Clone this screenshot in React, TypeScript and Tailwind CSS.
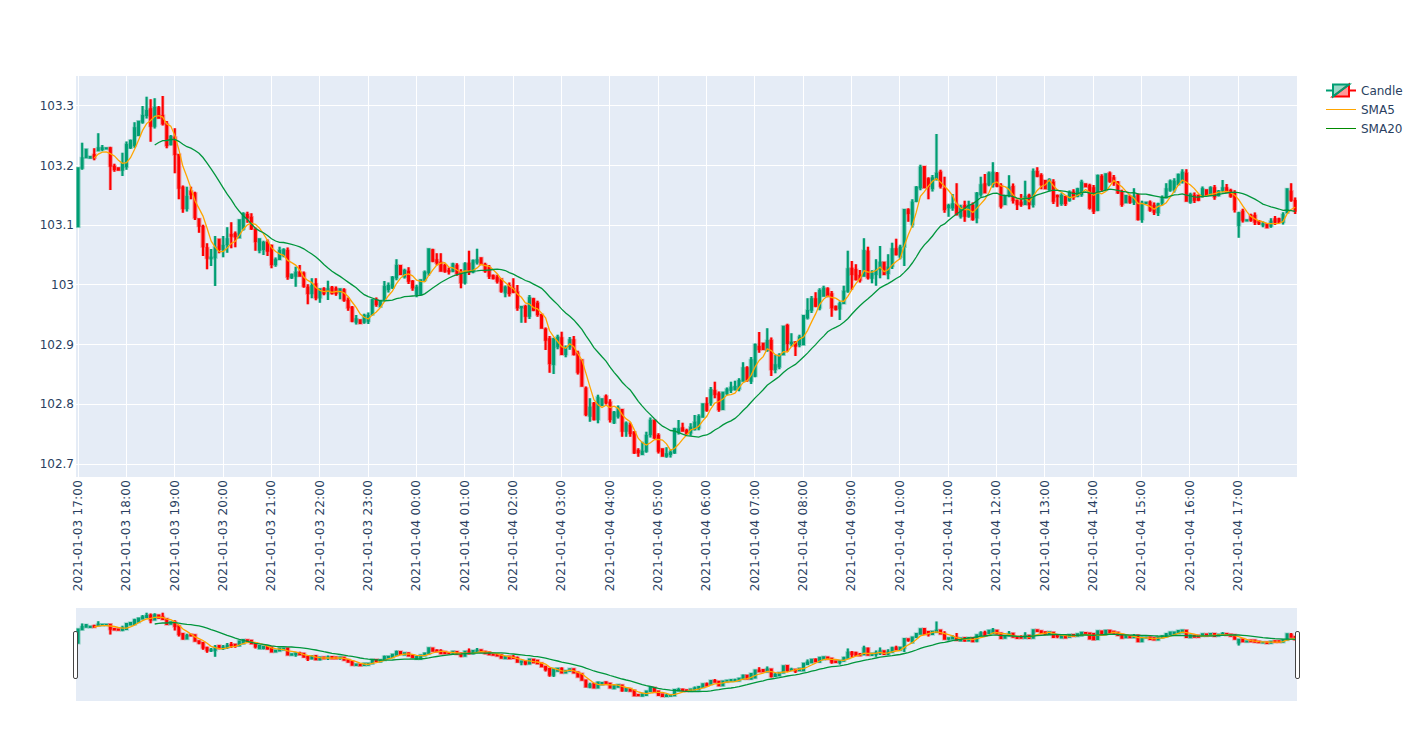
import React from "react";

// candle rows read off the chart: [up, bodyTop, bodyBottom, wickTop, wickBottom], 3x pixel rows from yBase
type Row = [number, number, number, number?, number?];

const sections: { yBase: number; rows: Row[] }[] = [
  {
    yBase: 70,
    rows: [
      [1,292,472,292,472],[1,262,296,218],[1,236,265,236,265],[1,258,266,258,266],[0,252,265,235],[1,232,244,190],[1,232,240,225],[1,232,235,232,235],
      [0,232,290,0,360],[0,287,300],[0,292,302],[1,278,302,248,318],[1,222,292],[1,210,235],[1,172,228,157],[1,152,198],
      [1,135,158,108],[1,120,138,80],[0,115,170,88,215],[1,110,170,85],[0,112,146,108],[0,135,163,78],[0,160,228,0,235],[1,198,225,195],
      [0,200,255,175,310],[0,252,356,0,388],[0,350,417,0,428],[1,378,417,350],[0,362,375,350,388],[0,368,445,365,450],[0,445,470,0,488],[0,468,532,0,558],
      [0,532,566,520,598],[1,560,568,537,588],[1,530,565,498,648],[0,506,540,0,550],[1,525,540,498,562],[1,505,525,472,548],[0,492,500,457,535],[0,490,502,0,532],
      [1,448,505],[1,430,478],[0,432,445,425,458],[0,440,478,430],[0,478,516,0,542],[1,505,542,0,550],[1,516,540,0,555],[0,516,545,0,558],
      [0,525,585,0,595],[1,568,585],[1,540,570,530],[1,538,558],[0,540,622],[1,612,625],[1,605,620,590,650],[0,605,620,585],
      [0,608,650],[0,650,672,0,703],[1,645,672,625,685],[0,640,685,625],[1,655,685,0,698],[0,655,672],[1,655,665,632,690],[0,650,672],
      [0,655,672],[1,655,668,0,688],[0,658,692],[0,690,715],[0,710,755],[1,745,758,735],[0,748,762],[1,735,758],
      [1,735,755],[1,688,735],[0,688,705],[1,690,712],
    ],
  },
  {
    yBase: 220,
    rows: [
      [1,198,240,183],[1,195,210],[1,170,205],[1,135,175,118],[0,135,165],[1,150,172],[0,152,185,142],[0,182,205,0,212],
      [1,200,226],[1,178,226],[1,155,182],[1,85,160,85],[0,88,125],[0,118,130,100],[0,125,155,100],[0,135,155],
      [0,150,155],[1,130,155],[0,135,162],[0,155,190,148,205],[1,130,190],[0,128,158,92],[1,120,158],[1,118,128,86],
      [0,112,135],[0,132,155],[0,142,170],[0,165,177],[0,170,185],[0,175,215,0,218],[1,200,220,0,232],[0,195,222],
      [0,205,218,175],[0,215,265,195,272],[1,258,265,0,308],[0,258,290,0,308],[1,232,290],[0,235,272],[0,248,285],[0,282,326],
      [0,326,362,0,390],[0,355,432,0,458],[1,355,435,0,462],[1,350,382],[0,352,405,335],[1,380,405,0,412],[1,358,382],[0,358,405,348],
      [0,398,458],[0,418,500],[0,503,585],[1,560,590,535,605],[0,548,600],[1,530,600,0,610],[1,535,558],[0,527,550],
      [0,545,600],[1,575,610],[1,562,590],[0,567,635,0,650],[1,608,635,0,650],[0,615,642,0,650],[0,635,700],[0,690,700,0,710],
      [1,692,705,665],[1,645,695,635],[1,600,645],[0,600,655],[0,645,695],
    ],
  },
  {
    yBase: 120,
    rows: [
      [0,985,1010],[1,1000,1010,982],[1,995,1005],[1,925,1000],[1,925,938,900],[0,922,935,908],[0,930,942],[1,920,940,910],
      [1,905,930,885],[1,888,925],[1,850,893],[0,850,872,832],[1,808,850],[0,810,825,785,835],[0,820,870],[1,815,870],
      [1,806,822],[1,800,812,785],[1,798,810,782],[1,780,808],[1,742,785,727],[0,742,782],[1,718,785],[1,672,770],
      [0,678,690,636,698],[0,668,690],[1,660,692,625],[0,660,750,0,768],[1,733,750,705,760],[1,705,742],[1,617,706],[0,615,672,0,695],
      [1,665,672,640],[0,665,680,0,708],[1,650,676],[1,585,676],[1,570,595,535],[1,535,572],[0,535,560,517],[1,510,565],
      [1,503,530,497],[0,505,528],[0,520,565,0,590],[0,558,570],[1,550,568,0,600],[1,512,552,497],[1,445,515,392],[0,443,465,423,510],
      [0,447,480,433],[0,465,482,450],[1,390,470,355],[0,392,475,380],[1,458,476,0,490],[1,450,465,418,497],[1,425,450,378,475],[0,425,465],
      [1,440,462,403,478],[1,385,440,368],[0,385,405,356],[1,380,412],[1,267,382,0,438],[0,268,282,0,305],[1,245,315],[1,200,245],
      [1,140,205],[0,138,205],[0,175,200,0,238],[1,172,207],[1,158,180,42],[0,155,200],[0,205,270,170,278],[1,255,265,0,290],
      [1,250,265,222],[0,252,285,190],
    ],
  },
  {
    yBase: 70,
    rows: [
      [1,410,440],[0,405,440,392,455],[1,405,440,392],[0,405,450,0,452],[1,368,445,0,460],[1,343,375,320],[0,340,370,312],[1,308,345],
      [1,305,345,277],[0,308,350],[0,345,410],[1,375,405],[1,350,378,316],[0,348,393],[0,390,405,0,420],[0,395,405,372,410],
      [1,378,405,332],[0,375,405,0,418],[1,303,405],[0,303,320,292],[0,315,345,0,358],[0,330,358],[1,328,360],[0,335,395],
      [0,375,378,0,410],[1,375,402],[0,378,402,0,408],[1,365,392],[0,365,382],[1,355,380],[1,335,375],[0,340,352],
      [0,345,415],[0,352,425],[1,315,422],[0,318,360],[1,310,362],[0,308,335],[0,322,340],[0,335,370],
      [0,365,405],[1,375,400],[0,378,398],[1,378,398,355],[0,372,450],[1,398,450,0,458],[1,395,402],[0,395,422],
      [0,405,428],[1,400,430,0,438],[1,382,400],[1,355,385,340],[1,332,362],[1,332,360],[1,312,345],[1,305,335,298],
      [0,308,395,298],[1,372,398],[0,375,392],[0,375,392],[1,355,378],[0,358,378],[1,352,375],[0,352,382],
      [1,362,378],[1,352,362,330],[0,352,368,342],[0,360,380],[0,368,420],[1,427,468,0,503],[0,422,452],[1,448,452],
      [0,435,452],[0,435,458],[0,452,463],[1,460,463],[0,460,475],[1,452,470,445],[0,445,458],[0,445,458],
      [1,432,458],[1,355,430],[0,362,392,340],[0,390,425],
    ],
  },
];

const GREEN = "#009e73";
const RED = "#ff0000";

type Candle = { up: boolean; x: number; top: number; bot: number; hi: number; lo: number; close: number };

// plot panels are positioned at x=76, candles are drawn in panel coordinates
const candles: Candle[] = sections
  .flatMap((s) => s.rows.map((r) => ({ s, r })))
  .map(({ s, r }, i) => {
    const toY = (z: number) => s.yBase + z / 3 - 76;
    const [up, t, b, h, l] = r;
    const spread = 1 + ((i * 7) % 5) * 0.6;
    const top = toY(t) + 1;
    const bot = Math.max(toY(b) - 1, top + 0.2);
    return {
      up: up === 1,
      x: 2.1 + 4.03 * i,
      top,
      bot,
      hi: h ? toY(h) : top - spread,
      lo: l ? toY(l) : bot + spread,
      close: up === 1 ? top : bot,
    };
  });

const sma = (n: number) =>
  candles.flatMap((c, i) => {
    if (i < n - 1) return [];
    const sum = candles.slice(i - n + 1, i + 1).reduce((acc, k) => acc + k.close, 0);
    return [[c.x, sum / n] as [number, number]];
  });

const sma5 = sma(5);
const sma20 = sma(20);

const hours = Array.from({ length: 25 }, (_, i) => i);
const xLabels = hours.map((h) => {
  const hour = (17 + h) % 24;
  const day = h < 7 ? "03" : "04";
  return `2021-01-${day} ${String(hour).padStart(2, "0")}:00`;
});

const yTicks = ["103.3", "103.2", "103.1", "103", "102.9", "102.8", "102.7"];
const yGrid = [29.5, 89.5, 149.5, 208.5, 268.5, 328.5, 388.5];

const candlePath = (c: Candle, half: number, scale: number) => {
  const top = c.top * scale;
  const bot = c.bot * scale;
  return `M${c.x - half},${top}H${c.x + half}V${bot}H${c.x - half}ZM${c.x},${top}V${c.hi * scale}M${c.x},${bot}V${c.lo * scale}`;
};

const Series: React.FC<{ scale: number }> = ({ scale }) => {
  const line = (pts: [number, number][]) =>
    "M" + pts.map(([x, y]) => `${x.toFixed(1)},${(y * scale).toFixed(1)}`).join("L");
  return (
    <>
      {candles.map((c, i) => (
        <g key={i} stroke={c.up ? GREEN : RED} fill={c.up ? GREEN : RED}>
          {/* pale halo the candles have in the picture */}
          <path d={candlePath(c, 0.9, scale)} strokeWidth={3.4} opacity={0.3} />
          <path d={candlePath(c, 0.5, scale)} strokeWidth={2} />
        </g>
      ))}
      <path d={line(sma5)} fill="none" stroke="#ffa500" strokeWidth={1.3} />
      <path d={line(sma20)} fill="none" stroke="#00963c" strokeWidth={1.3} />
    </>
  );
};

const LegendRow: React.FC<{ label: string; children: React.ReactNode }> = ({ label, children }) => (
  <div className="flex h-[19px] items-center">
    <svg width="30" height="19" viewBox="-15 -9.5 30 19" className="shrink-0">
      {children}
    </svg>
    <span className="ml-[5px] whitespace-nowrap">{label}</span>
  </div>
);

export default function App() {
  return (
    <div className="w-[1409px] h-[733px] overflow-hidden bg-white pt-[76px] text-xs text-[#2a3f5f] font-['DejaVu_Sans',Verdana,sans-serif]">
      <div className="flex h-[401px]">
        <div className="flex w-[76px] shrink-0 flex-col">
          {yTicks.map((t) => (
            <div key={t} className="flex h-[59.7px] shrink-0 items-center justify-end pr-[2px]">
              {t}
            </div>
          ))}
        </div>
        <div className="h-[401px] w-[1221px] shrink-0 bg-[#e5ecf6]">
          <svg width="1221" height="401" className="block">
            {hours.map((h) => {
              const x = Math.floor(2.3 + 48.33 * h) + 0.5;
              return <line key={h} x1={x} x2={x} y1={0} y2={401} stroke="#fff" strokeWidth={1} />;
            })}
            {yGrid.map((y) => (
              <line key={y} x1={0} x2={1221} y1={y} y2={y} stroke="#fff" strokeWidth={1} />
            ))}
            <Series scale={1} />
          </svg>
        </div>
        <div className="ml-[29px] flex flex-col pt-[5px]">
          <LegendRow label="Candle">
            <path d="M15,0H8M8,-6V6H-8Z" stroke={RED} strokeWidth={2} fill="rgba(255,0,0,0.4)" />
            <path d="M-15,0H-8M-8,6V-6H8Z" stroke={GREEN} strokeWidth={2} fill="rgba(0,158,115,0.4)" />
          </LegendRow>
          <LegendRow label="SMA5">
            <line x1={-15} x2={15} y1={0} y2={0} stroke="#ffa500" strokeWidth={1} />
          </LegendRow>
          <LegendRow label="SMA20">
            <line x1={-15} x2={15} y1={0} y2={0} stroke="#008a00" strokeWidth={1} />
          </LegendRow>
        </div>
      </div>

      <div className="flex h-[131px] items-start pl-[54px] pt-[3px]">
        {xLabels.map((label) => (
          <div key={label} className="flex w-[48.33px] shrink-0 justify-center">
            <span className="rotate-180 whitespace-nowrap leading-[12px] tracking-[0.2px] [writing-mode:vertical-rl]">
              {label}
            </span>
          </div>
        ))}
      </div>

      <div className="relative ml-[76px] h-[93px] w-[1221px] bg-[#e5ecf6]">
        <svg width="1221" height="93" className="block">
          <Series scale={93 / 401} />
        </svg>
        <div className="absolute left-[-3px] top-[23px] h-[48px] w-[5px] rounded-[2px] border border-[#444] bg-white" />
        <div className="absolute left-[1219px] top-[23px] h-[48px] w-[5px] rounded-[2px] border border-[#444] bg-white" />
      </div>
    </div>
  );
}
